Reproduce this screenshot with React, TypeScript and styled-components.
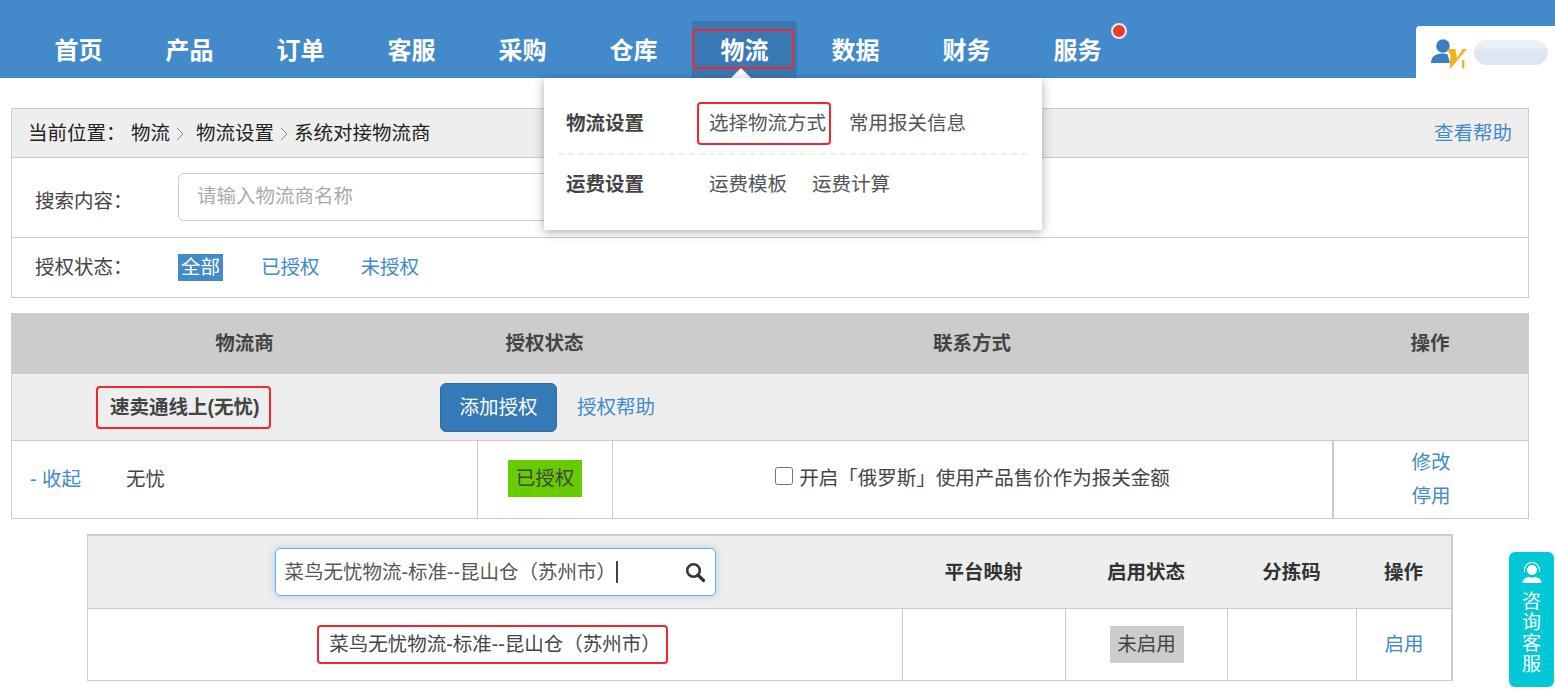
import React from 'react';
import styled, { createGlobalStyle } from 'styled-components';

const GlobalStyle = createGlobalStyle`
  html, body {
    margin: 0;
    padding: 0;
    background: #fff;
    overflow: hidden;
  }
  body {
    color: #444;
    font-family: "Liberation Sans", "Noto Sans CJK SC", sans-serif;
    font-size: 19.5px;
    line-height: 27px;
  }
  * { box-sizing: border-box; }
`;

// annotation frame drawn over the text it marks
const Marked = styled.span<{ $x: number; $y: number; $right?: number }>`
  position: relative;
  display: inline-block;
  &::after {
    content: '';
    position: absolute;
    top: ${p => -p.$y}px;
    bottom: ${p => -p.$y}px;
    left: ${p => -p.$x}px;
    right: ${p => -(p.$right ?? p.$x)}px;
    border: 2px solid #f0282d;
    border-radius: 4px;
    pointer-events: none;
  }
`;

const Header = styled.header`
  position: relative;
  display: flex;
  align-items: flex-end;
  justify-content: space-between;
  height: 78px;
  padding-left: 26px;
  background: #428aca;
`;

const Nav = styled.nav`
  display: flex;
  gap: 6px;
`;

const NavItem = styled.div<{ $active?: boolean }>`
  position: relative;
  display: flex;
  align-items: center;
  justify-content: center;
  width: 105px;
  height: 57px;
  padding-top: 2px;
  color: #fff;
  font-size: 24px;
  font-weight: 700;
  border-radius: 2px 2px 0 0;
  background: ${p => (p.$active ? '#3a78b4' : 'transparent')};
`;

const NavFrame = styled.span`
  position: absolute;
  left: 0;
  top: 8px;
  width: 102px;
  height: 40px;
  border: 2px solid #f0282d;
  border-radius: 4px;
`;

const Dot = styled.span`
  position: absolute;
  left: 86px;
  top: 2px;
  width: 16px;
  height: 16px;
  border-radius: 50%;
  background: #ee3a33;
  border: 2px solid #e9edf2;
`;

const Arrow = styled.span`
  position: absolute;
  left: 39px;
  bottom: 0;
  width: 0;
  height: 0;
  border-left: 10px solid transparent;
  border-right: 10px solid transparent;
  border-bottom: 10px solid #fff;
`;

const UserTab = styled.div`
  display: flex;
  align-items: center;
  width: 139px;
  height: 52px;
  padding: 0 7px 0 14px;
  background: #fff;
  border-radius: 4px 0 0 0;
`;

const BlurName = styled.span`
  flex: 1;
  height: 25px;
  border-radius: 13px;
  background: linear-gradient(#e9f0f8 30%, #dde7f3 40%);
`;

const Menu = styled.div`
  position: absolute;
  z-index: 5;
  left: 544px;
  top: 78px;
  width: 498px;
  height: 152px;
  padding: 16px 15px 0 14px;
  background: #fff;
  box-shadow: 0 2px 10px rgba(40, 50, 70, 0.4);
`;

const MenuRow = styled.div<{ $first?: boolean }>`
  display: flex;
  align-items: center;
  height: ${p => (p.$first ? '61px' : '58px')};
  ${p => p.$first && 'border-bottom: 2px dashed #eee;'}
`;

const MenuTitle = styled.div`
  width: 151px;
  padding-left: 8px;
  font-weight: 700;
`;

const MenuLinks = styled.div<{ $gap: number }>`
  display: flex;
  gap: ${p => p.$gap}px;
  color: #555;
`;

const Main = styled.main`
  padding: 30px 26px 0 11px;
`;

const Panel = styled.section`
  border: 1px solid #ccc;
`;

const Crumbs = styled.div`
  display: flex;
  align-items: center;
  height: 49px;
  padding: 1px 16px 0;
  background: #eee;
  color: #222;
  border-bottom: 1px solid #ccc;
`;

const CrumbLabel = styled.span`
  width: 103px;
`;

const Chevron = styled.svg<{ $after: number }>`
  margin: 0 ${p => p.$after}px 0 6px;
`;

const HelpLink = styled.a`
  margin-left: auto;
  color: #428bca;
`;

const SearchRow = styled.div`
  display: flex;
  align-items: center;
  height: 80px;
  padding: 0 0 2px 23px;
  border-bottom: 1px solid #ccc;
`;

const FilterLabel = styled.span`
  width: 143px;
`;

const SearchLabel = styled(FilterLabel)`
  padding-top: 10px;
`;

const SearchBox = styled.div`
  display: flex;
  align-items: center;
  width: 440px;
  height: 48px;
  padding: 0 0 1px 18px;
  color: #aaa;
  border: 1px solid #ccc;
  border-radius: 6px;
`;

const FilterRow = styled.div`
  display: flex;
  align-items: center;
  height: 59px;
  padding-left: 23px;
`;

const FilterOption = styled.a<{ $active?: boolean }>`
  display: flex;
  align-items: center;
  height: 27px;
  padding: 0 3px;
  margin-right: 35px;
  color: ${p => (p.$active ? '#fff' : '#428bca')};
  background: ${p => (p.$active ? '#428bca' : 'transparent')};
`;

const Table = styled.section`
  margin-top: 15px;
  border: 1px solid #ccc;
  border-top: 0;
`;

const TableHead = styled.div`
  display: grid;
  grid-template-columns: 465px 135px 720px 1fr;
  align-items: center;
  height: 61px;
  background: #ccc;
  font-weight: 700;
  text-align: center;
`;

const GroupRow = styled.div`
  display: flex;
  align-items: center;
  height: 67px;
  padding-left: 98px;
  background: #eee;
  border-bottom: 1px solid #ccc;
`;

const GroupName = styled.b`
  display: inline-block;
  width: 330px;
`;

const AddButton = styled.button`
  width: 117px;
  height: 49px;
  margin-right: 20px;
  padding: 0;
  color: #fff;
  font: inherit;
  background: #337ab7;
  border: 1px solid #2e6da4;
  border-radius: 6px;
`;

const TextLink = styled.a`
  color: #428bca;
`;

const DataRow = styled.div`
  display: grid;
  grid-template-columns: 465px 135px 720px 1fr;
  height: 77px;
`;

const Cell = styled.div<{ $border?: boolean }>`
  display: flex;
  align-items: center;
  justify-content: center;
  ${p => p.$border && 'border-left: 1px solid #ccc;'}
`;

const NameCell = styled(Cell)`
  justify-content: flex-start;
  gap: 45px;
  padding-left: 18px;
  color: #444;
`;

const StackCell = styled(Cell)`
  flex-direction: column;
  gap: 7px;
  border-left-width: 2px;
`;

const Badge = styled.span<{ $bg: string }>`
  display: flex;
  align-items: center;
  justify-content: center;
  width: 74px;
  height: 37px;
  background: ${p => p.$bg};
`;

const AuthBadge = styled(Badge)`
  margin-bottom: 2px;
`;

const CheckLabel = styled.label`
  display: flex;
  align-items: center;
  gap: 6px;
  margin-bottom: 3px;
`;

const CheckBox = styled.input`
  width: 18px;
  height: 18px;
  margin: 0 0 4px;
`;

const SubTable = styled.section`
  width: 1366px;
  margin: 15px 0 0 76px;
  border: 1px solid #ccc;
  border-top-width: 2px;
  border-right-width: 2px;
`;

const SubHead = styled.div`
  display: grid;
  grid-template-columns: 814px 163px 162px 129px 1fr;
  align-items: center;
  height: 73px;
  background: #eee;
  border-bottom: 1px solid #ccc;
  font-weight: 700;
  color: #333;
  text-align: center;
`;

const SubRow = styled.div`
  display: grid;
  grid-template-columns: 814px 163px 162px 129px 1fr;
  height: 71px;
`;

const FocusInput = styled.div`
  display: flex;
  align-items: center;
  width: 441px;
  height: 48px;
  margin: 0 auto;
  padding: 0 9px;
  font-weight: 400;
  color: #555;
  background: #fff;
  border: 1px solid #66afe9;
  border-radius: 5px;
  box-shadow: 0 0 8px rgba(102, 175, 233, 0.5);
`;

const Caret = styled.span`
  width: 2px;
  height: 22px;
  margin-left: 0;
  background: #444;
`;

const SearchIcon = styled.svg`
  margin-left: auto;
`;

const ServiceTab = styled.aside`
  position: fixed;
  right: 1px;
  top: 552px;
  display: flex;
  flex-direction: column;
  align-items: center;
  width: 45px;
  height: 135px;
  padding-top: 9px;
  color: #fff;
  font-size: 19px;
  line-height: 21px;
  text-align: center;
  background: #00c8d7;
  border-radius: 6px;
`;

const ServiceText = styled.div`
  width: 20px;
  margin-top: 8px;
`;

const UserIcon = () => (
  <svg width="44" height="34" viewBox="0 0 44 34">
    <circle cx="13" cy="11" r="6.800" fill="#3a7fc0" />
    <path d="M1 28c0-6 4-9.500 11-9.500 2.500 0 4 .3 5.500 .8l2.500 8.700z" fill="#3a7fc0" />
    <path d="M17 14h8.500l1.500 9 5.500-9h4.500L21 33h-1.500l1-12.500z" fill="#f0b323" />
    <rect x="32" y="25" width="2.400" height="8.500" fill="#f0b323" />
  </svg>
);

const HeadsetIcon = () => (
  <svg width="24" height="22" viewBox="0 0 24 22">
    <circle cx="12" cy="9" r="5" fill="#fff" />
    <path d="M4.500 11V9a7.500 7.500 0 0 1 15 0v2" fill="none" stroke="#fff" strokeWidth="1.100" />
    <path d="M2.500 22c0-3.500 2.500-5.500 6.500-6 1.500 1 4.500 1 6 0 4 .5 6.500 2.500 6.500 6z" fill="#fff" />
  </svg>
);

const CrumbArrow = ({ after }: { after: number }) => (
  <Chevron $after={after} width="8" height="14" viewBox="0 0 8 14">
    <path d="M1 1l6 6-6 6" fill="none" stroke="#888" strokeWidth="1" />
  </Chevron>
);

const navItems = ['首页', '产品', '订单', '客服', '采购', '仓库', '物流', '数据', '财务', '服务'];

const App: React.FC = () => {
  return (
    <>
      <GlobalStyle />
      <Header>
        <Nav>
          {navItems.map(name => (
            <NavItem key={name} $active={name === '物流'}>
              {name}
              {name === '物流' && <NavFrame />}
              {name === '物流' && <Arrow />}
              {name === '服务' && <Dot />}
            </NavItem>
          ))}
        </Nav>
        <UserTab>
          <UserIcon />
          <BlurName />
        </UserTab>
      </Header>

      <Menu>
        <MenuRow $first>
          <MenuTitle>物流设置</MenuTitle>
          <MenuLinks $gap={23}>
            <Marked $x={12} $right={5} $y={8}>选择物流方式</Marked>
            <span>常用报关信息</span>
          </MenuLinks>
        </MenuRow>
        <MenuRow>
          <MenuTitle>运费设置</MenuTitle>
          <MenuLinks $gap={25}>
            <span>运费模板</span>
            <span>运费计算</span>
          </MenuLinks>
        </MenuRow>
      </Menu>

      <Main>
        <Panel>
          <Crumbs>
            <CrumbLabel>当前位置：</CrumbLabel>
            <span>物流</span>
            <CrumbArrow after={12} />
            <span>物流设置</span>
            <CrumbArrow after={6} />
            <span>系统对接物流商</span>
            <HelpLink>查看帮助</HelpLink>
          </Crumbs>
          <SearchRow>
            <SearchLabel>搜索内容：</SearchLabel>
            <SearchBox>请输入物流商名称</SearchBox>
          </SearchRow>
          <FilterRow>
            <FilterLabel>授权状态：</FilterLabel>
            <FilterOption $active>全部</FilterOption>
            <FilterOption>已授权</FilterOption>
            <FilterOption>未授权</FilterOption>
          </FilterRow>
        </Panel>

        <Table>
          <TableHead>
            <div>物流商</div>
            <div>授权状态</div>
            <div>联系方式</div>
            <div>操作</div>
          </TableHead>
          <GroupRow>
            <GroupName>
              <Marked $x={14} $right={11} $y={8}>速卖通线上(无忧)</Marked>
            </GroupName>
            <AddButton>添加授权</AddButton>
            <TextLink>授权帮助</TextLink>
          </GroupRow>
          <DataRow>
            <NameCell>
              <TextLink>- 收起</TextLink>
              <span>无忧</span>
            </NameCell>
            <Cell $border>
              <AuthBadge $bg="#66cc00">已授权</AuthBadge>
            </Cell>
            <Cell $border>
              <CheckLabel>
                <CheckBox type="checkbox" />
                开启「俄罗斯」使用产品售价作为报关金额
              </CheckLabel>
            </Cell>
            <StackCell $border>
              <TextLink>修改</TextLink>
              <TextLink>停用</TextLink>
            </StackCell>
          </DataRow>
        </Table>

        <SubTable>
          <SubHead>
            <div>
              <FocusInput>
                菜鸟无忧物流-标准--昆山仓（苏州市）
                <Caret />
                <SearchIcon width="22" height="22" viewBox="0 0 22 22">
                  <circle cx="9.500" cy="9.500" r="6.300" fill="none" stroke="#333" strokeWidth="2.600" />
                  <path d="M14 14l5.500 5.500" stroke="#333" strokeWidth="3.200" strokeLinecap="round" />
                </SearchIcon>
              </FocusInput>
            </div>
            <div>平台映射</div>
            <div>启用状态</div>
            <div>分拣码</div>
            <div>操作</div>
          </SubHead>
          <SubRow>
            <Cell>
              <Marked $x={12} $right={7} $y={6}>菜鸟无忧物流-标准--昆山仓（苏州市）</Marked>
            </Cell>
            <Cell $border />
            <Cell $border>
              <Badge $bg="#ccc">未启用</Badge>
            </Cell>
            <Cell $border />
            <Cell $border>
              <TextLink>启用</TextLink>
            </Cell>
          </SubRow>
        </SubTable>
      </Main>

      <ServiceTab>
        <HeadsetIcon />
        <ServiceText>咨询客服</ServiceText>
      </ServiceTab>
    </>
  );
};

export default App;
